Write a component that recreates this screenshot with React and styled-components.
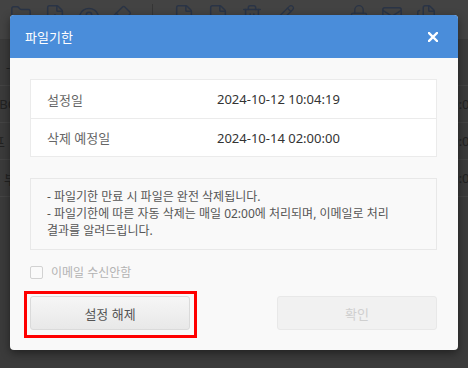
import React from 'react'
import styled, { createGlobalStyle } from 'styled-components'
import { Folder, FileUp, Eye, Eraser, File, Trash2, Pencil, Lock, Mail, Files } from 'lucide-react'

const GlobalStyle = createGlobalStyle`
  html, body {
    margin: 0;
    padding: 0;
    background: #3b3b3b;
    overflow: hidden;
  }
  * {
    box-sizing: border-box;
  }
  body {
    font-family: "Noto Sans", "Noto Sans CJK KR", sans-serif;
  }
`

// dimmed page behind the dialog
const Screen = styled.div`
  position: relative;
  width: 468px;
  height: 368px;
  overflow: hidden;
  background: #3b3b3b;
`

const Toolbar = styled.div`
  display: flex;
  align-items: flex-start;
  gap: 12px;
  height: 40px;
  padding: 4px 0 0 10px;
  background: #434343;
  border-bottom: 1px solid #3a3a3a;
  color: #2a3446;

  svg {
    flex: none;
  }
`

const ToolDivider = styled.span`
  width: 1px;
  height: 22px;
  margin: 0 8px;
  background: #353535;
`

const ToolGap = styled.span`
  width: ${(props) => props.$w}px;
`

const List = styled.div`
  padding-top: 9px;
`

const ListRow = styled.div`
  display: flex;
  justify-content: space-between;
  align-items: center;
  height: 37px;
  border-bottom: 1px solid #444;
  font-size: 13px;
  color: #222;
  white-space: nowrap;
`

const RowName = styled.span`
  margin-left: ${(props) => props.$shift}px;
`

const RowDate = styled.span`
  margin-right: -9px;
`

// dialog
const Dialog = styled.div`
  position: absolute;
  left: 10px;
  top: 15px;
  width: 448px;
  border-radius: 4px;
  overflow: hidden;
  background: #f9f9f9;
  box-shadow: 0 3px 10px rgba(0, 0, 0, 0.45);
`

const Header = styled.div`
  display: flex;
  align-items: center;
  justify-content: space-between;
  height: 43px;
  padding: 0 20px 0 15px;
  background: #4a8dda;
  color: #fff;
`

const Title = styled.h2`
  margin: 0;
  font-size: 13px;
  font-weight: 400;
`

const CloseButton = styled.button`
  display: flex;
  padding: 0;
  border: none;
  background: none;
  cursor: pointer;
`

const Body = styled.div`
  display: flex;
  flex-direction: column;
  padding: 21px 21px 20px 20px;
`

const InfoTable = styled.div`
  background: #fff;
  border: 1px solid #ebebeb;
`

const InfoRow = styled.div`
  display: flex;
  align-items: center;
  height: 38px;
  padding-left: 16px;
  font-size: 13px;

  & + & {
    border-top: 1px solid #ebebeb;
    height: 38px;
  }
`

const InfoLabel = styled.span`
  width: 170px;
  color: #666;
`

const InfoValue = styled.span`
  color: #333;
`

const Notice = styled.div`
  margin-top: 21px;
  padding: 10px 16px;
  border: 1px solid #e8e8e8;
  background: #f9f9f9;
  font-size: 12px;
  line-height: 16.8px;
  color: #555;

  p {
    margin: 0;
    white-space: nowrap;
  }
`

const CheckRow = styled.label`
  display: flex;
  align-items: center;
  gap: 8px;
  height: 13px;
  margin-top: 16px;
  font-size: 12px;
  line-height: 13px;
  color: #b3b3b3;
`

const CheckBox = styled.span`
  width: 13px;
  height: 13px;
  border: 1px solid #d2d2d2;
  border-radius: 2px;
  background: #fafafa;
`

const Actions = styled.div`
  display: flex;
  justify-content: space-between;
  margin-top: 17px;
`

const Highlight = styled.span`
  position: relative;
  display: flex;

  &::after {
    content: '';
    position: absolute;
    top: -5px;
    left: -6px;
    right: -7px;
    bottom: -8px;
    border: 3px solid #ff0000;
    pointer-events: none;
  }
`

const Button = styled.button`
  width: 160px;
  height: 34px;
  border-radius: 3px;
  font: inherit;
  font-size: 13px;
  cursor: pointer;
  border: 1px solid ${(props) => (props.disabled ? '#e8e8e8' : '#dadada')};
  background: ${(props) =>
    props.disabled ? '#f1f1f1' : 'linear-gradient(#f6f6f6, #e8e8e8)'};
  color: ${(props) => (props.disabled ? '#cfcfcf' : '#555')};
`

const backRows = [
  { name: '-', shift: 6, date: '' },
  { name: 'ABC', shift: -9, date: '10:00' },
  { name: '프', shift: -7, date: '10:00' },
  { name: '부', shift: 4, date: '10:00' },
]

export default function App() {
  return (
    <>
      <GlobalStyle />
      <Screen>
        <Toolbar>
          <Folder size={22} strokeWidth={1.6} />
          <FileUp size={22} strokeWidth={1.6} />
          <Eye size={22} strokeWidth={1.6} />
          <Eraser size={20} strokeWidth={1.6} />
          <ToolDivider />
          <File size={22} strokeWidth={1.6} />
          <File size={22} strokeWidth={1.6} />
          <Trash2 size={22} strokeWidth={1.6} />
          <Pencil size={20} strokeWidth={1.6} />
          <ToolGap $w={30} />
          <Lock size={20} strokeWidth={1.6} />
          <Mail size={22} strokeWidth={1.6} />
          <Files size={22} strokeWidth={1.6} />
        </Toolbar>
        <List>
          {backRows.map((row, i) => (
            <ListRow key={i}>
              <RowName $shift={row.shift}>{row.name}</RowName>
              <RowDate>{row.date}</RowDate>
            </ListRow>
          ))}
        </List>

        <Dialog>
          <Header>
            <Title>파일기한</Title>
            <CloseButton aria-label="닫기">
              <svg width="10" height="10" viewBox="0 0 10 10">
                <path d="M1 1 L9 9 M9 1 L1 9" stroke="#fff" strokeWidth="2.4" strokeLinecap="square" />
              </svg>
            </CloseButton>
          </Header>
          <Body>
            <InfoTable>
              <InfoRow>
                <InfoLabel>설정일</InfoLabel>
                <InfoValue>2024-10-12 10:04:19</InfoValue>
              </InfoRow>
              <InfoRow>
                <InfoLabel>삭제 예정일</InfoLabel>
                <InfoValue>2024-10-14 02:00:00</InfoValue>
              </InfoRow>
            </InfoTable>
            <Notice>
              <p>- 파일기한 만료 시 파일은 완전 삭제됩니다.</p>
              <p>- 파일기한에 따른 자동 삭제는 매일 02:00에 처리되며, 이메일로 처리</p>
              <p>결과를 알려드립니다.</p>
            </Notice>
            <CheckRow>
              <CheckBox />
              이메일 수신안함
            </CheckRow>
            <Actions>
              <Highlight>
                <Button>설정 해제</Button>
              </Highlight>
              <Button disabled>확인</Button>
            </Actions>
          </Body>
        </Dialog>
      </Screen>
    </>
  )
}
